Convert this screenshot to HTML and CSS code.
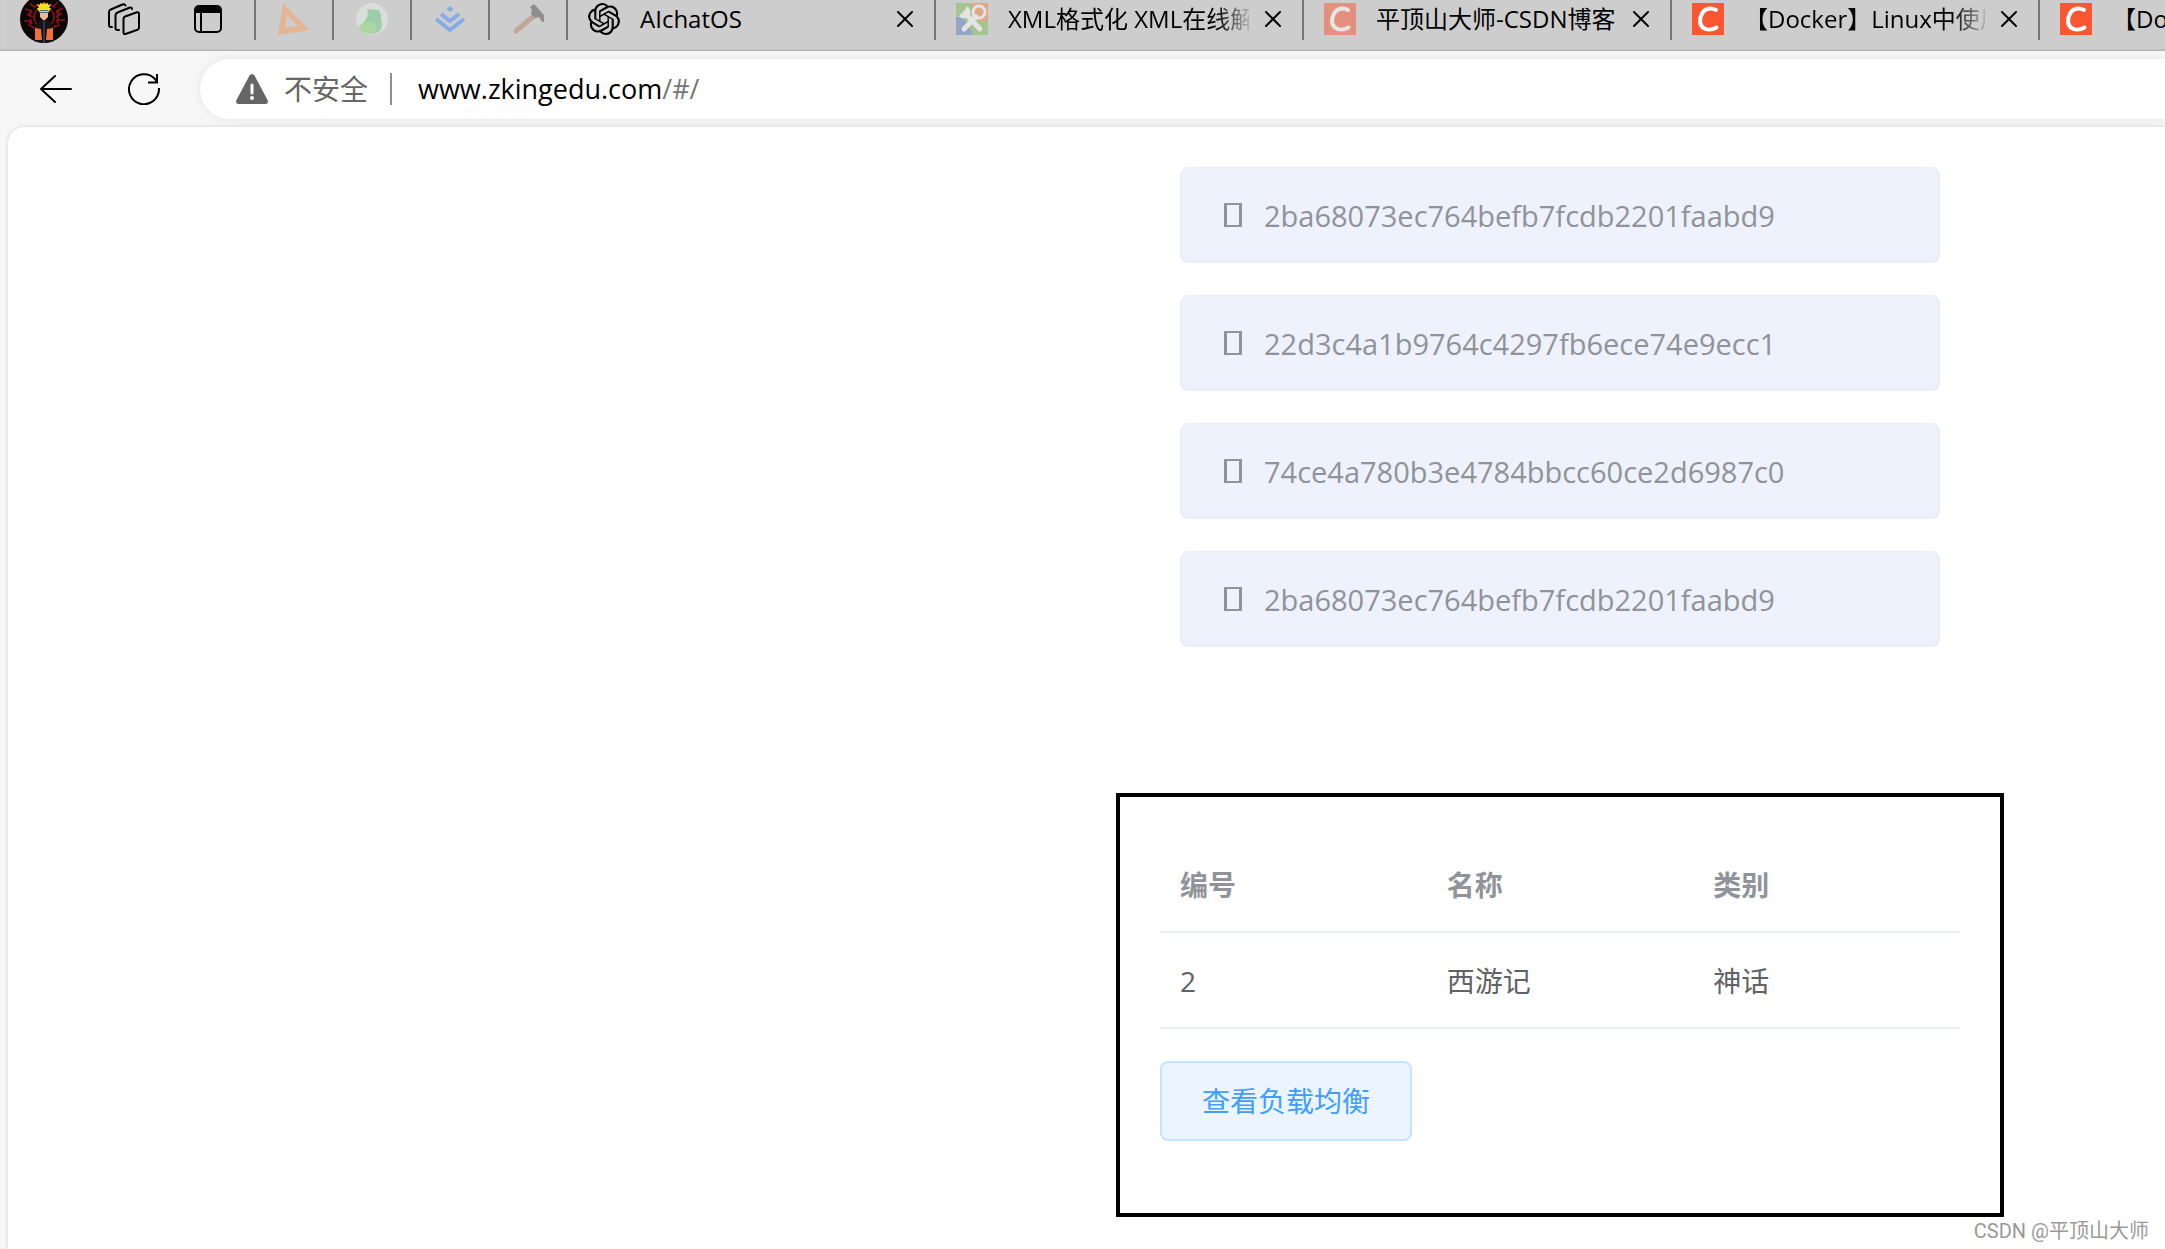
FILE: index.html
```html
<!DOCTYPE html>
<html lang="zh-CN">
<head>
<meta charset="utf-8">
<meta name="viewport" content="width=device-width, initial-scale=1">
<title>www.zkingedu.com</title>
<link rel="stylesheet" href="styles.css">
</head>
<body>
<svg class="sprite" aria-hidden="true">
  <symbol id="close" viewBox="0 0 16 16"><path d="M1 1l14 14M15 1L1 15" fill="none" stroke="#000" stroke-width="2" stroke-linecap="round"/></symbol>
  <symbol id="csdn" viewBox="0 0 32 32"><rect width="32" height="32" fill="#fc5531"/><path d="M24 7C19 4 13 5.500 10 10.500C7 16 7.500 22 11 24.500C14.500 27.500 20 27 24.500 24.500" fill="none" stroke="#fff" stroke-width="4" stroke-linecap="round" stroke-linejoin="round"/></symbol>
</svg>

<header class="browser">
  <div class="strip">
    <div class="strip-tools">
      <button class="avatar" aria-label="个人资料">
        <svg viewBox="0 0 48 48" width="48" height="48">
          <defs><clipPath id="round"><circle cx="24" cy="24" r="24"/></clipPath></defs>
          <g clip-path="url(#round)">
            <rect width="48" height="48" fill="#0b0708"/>
            <g fill="none" stroke="#8e1015" stroke-width="1.500">
              <circle cx="24" cy="22" r="10"/>
              <circle cx="24" cy="22" r="14" stroke-dasharray="6 3"/>
              <path d="M5 14l6 2-3 4 5 2M4 26h7l-2 4 5 3M43 13l-6 3 4 3-5 3M45 25h-8l2 5-5 2M10 8l4 4M38 7l-5 5"/>
            </g>
            <path d="M16 29l5-4h7l4 4 2 19H14z" fill="#141419"/>
            <path d="M15 33l6 1 1 11h-7zM33 33l-6 1-1 11h7z" fill="#f0703a"/>
            <path d="M23 25h2v23h-2z" fill="#34343c"/>
            <path d="M20 17h8v5l-3 3h-2l-3-3z" fill="#f0b891"/>
            <path d="M19 15h10v3H19z" fill="#59657a"/>
            <path d="M20 16h8v1h-8z" fill="#c9d0d8"/>
            <path d="M19 17l-2-4 2 0-2-4 3 1 0-2 3 1 1-2 1 2 3-1 0 2 3-1-2 4 2 0-2 4-1-2H20z" fill="#f4e21b"/>
          </g>
        </svg>
      </button>
      <button class="tool" aria-label="工作区">
        <svg viewBox="0 0 32 32" width="32" height="32" fill="none" stroke="#000" stroke-width="2" stroke-linejoin="round" stroke-linecap="round">
          <path d="M17 13.500L29 9.200Q31 8.800 31 11V24.500Q31 26.200 29.500 26.800L17.500 31Q15.500 31.500 15.500 29.500V16Q15.500 14 17 13.500z"/>
          <path d="M11 27H9.500Q7.500 27 7.500 25V12.500Q7.500 10.500 9.500 9.500L22 4.500Q24 4.200 24 6"/>
          <path d="M4 24H3Q1 24 1 22V9Q1 7.200 2.800 6.500L14.500 1.500Q17 .7 17.500 2.500"/>
        </svg>
      </button>
      <button class="tool" aria-label="标签页操作">
        <svg viewBox="0 0 28 28" width="28" height="28"><rect x="1" y="1" width="26" height="26" rx="4" fill="none" stroke="#000" stroke-width="2"/><path d="M1 8V4q0-3 3-3h20q3 0 3 3v4zM6 8h2v19H6z"/></svg>
      </button>
    </div>

    <nav class="tabs" aria-label="标签页">
      <div class="tab pinned"><svg class="icon faded" viewBox="0 0 32 32"><path d="M5 0L31 27 0 32zM9 12L7 25 20 23z" fill="#fa9f5b" fill-rule="evenodd"/></svg></div>
      <div class="tab pinned"><svg class="icon faded" viewBox="0 0 32 32"><circle cx="16" cy="16" r="16" fill="#e8f0ea"/><path d="M11 6l12 1 2 5v5q3 8-3 12-6 4-13 1Q4 27 3 24q9-8 9-14z" fill="#6fd088"/><path d="M2 24q8-8 17-3 3 5 0 10-12 1-17-7z" fill="#8fe07b"/></svg></div>
      <div class="tab pinned"><svg class="icon faded" viewBox="0 0 32 32"><path d="M16 3l3.500 3-3.500 3-3.500-3z" fill="#408cff"/><path d="M7 11l9 7 9-7M2 16l14 11 14-11" fill="none" stroke="#408cff" stroke-width="4"/></svg></div>
      <div class="tab pinned"><svg class="icon" viewBox="0 0 32 32"><path d="M23 12L4 28" stroke="#c1a698" stroke-width="5" stroke-linecap="round"/><path d="M18 4l4-3 10 11v7l-2 0-3-5-4 1-4-4 1-4z" fill="#8e8e8e"/></svg></div>
      <div class="tab">
        <svg class="icon" viewBox="0 0 24 24"><path d="M22.2819 9.8211a5.9847 5.9847 0 0 0-.5157-4.9108 6.0462 6.0462 0 0 0-6.5098-2.9A6.0651 6.0651 0 0 0 4.9807 4.1818a5.9847 5.9847 0 0 0-3.9977 2.9 6.0462 6.0462 0 0 0 .7427 7.0966 5.98 5.98 0 0 0 .511 4.9107 6.051 6.051 0 0 0 6.5146 2.9001A5.9847 5.9847 0 0 0 13.2599 24a6.0557 6.0557 0 0 0 5.7718-4.2058 5.9894 5.9894 0 0 0 3.9977-2.9001 6.0557 6.0557 0 0 0-.7475-7.0729zm-9.022 12.6081a4.4755 4.4755 0 0 1-2.8764-1.0408l.1419-.0804 4.7783-2.7582a.7948.7948 0 0 0 .3927-.6813v-6.7369l2.02 1.1686a.071.071 0 0 1 .038.052v5.5826a4.504 4.504 0 0 1-4.4945 4.4944zm-9.6607-4.1254a4.4708 4.4708 0 0 1-.5346-3.0137l.142.0852 4.783 2.7582a.7712.7712 0 0 0 .7806 0l5.8428-3.3685v2.3324a.0804.0804 0 0 1-.0332.0615L9.74 19.9502a4.4992 4.4992 0 0 1-6.1408-1.6464zM2.3408 7.8956a4.485 4.485 0 0 1 2.3655-1.9728V11.6a.7664.7664 0 0 0 .3879.6765l5.8144 3.3543-2.0201 1.1685a.0757.0757 0 0 1-.071 0l-4.8303-2.7865A4.504 4.504 0 0 1 2.3408 7.872zm16.5963 3.8558L13.1038 8.364 15.1192 7.2a.0757.0757 0 0 1 .071 0l4.8303 2.7913a4.4944 4.4944 0 0 1-.6765 8.1042v-5.6772a.79.79 0 0 0-.407-.667zm2.0107-3.0231l-.142-.0852-4.7735-2.7818a.7759.7759 0 0 0-.7854 0L9.409 9.2297V6.8974a.0662.0662 0 0 1 .0284-.0615l4.8303-2.7866a4.4992 4.4992 0 0 1 6.6802 4.66zM8.3065 12.863l-2.02-1.1638a.0804.0804 0 0 1-.038-.0567V6.0742a4.4992 4.4992 0 0 1 7.3757-3.4537l-.142.0805L8.704 5.459a.7948.7948 0 0 0-.3927.6813zm1.0976-2.3654l2.602-1.4998 2.6069 1.4998v2.9994l-2.5974 1.4997-2.6067-1.4997Z"/></svg>
        <span class="title">AIchatOS</span>
        <button class="close" aria-label="关闭"><svg width="16" height="16"><use href="#close"/></svg></button>
      </div>
      <div class="tab">
        <svg class="icon" viewBox="0 0 32 32"><rect width="32" height="32" fill="#a6c48e"/><path d="M16 0h16v18h-8L16 8z" fill="#dfa883"/><path d="M0 14h6l10 14v4H0z" fill="#95a5c5"/><circle cx="23" cy="9" r="6" fill="#dfa883" stroke="#e4e4e4" stroke-width="3"/><path d="M9 10l15 16M20 14L8 26" stroke="#e4e4e4" stroke-width="5" stroke-linecap="round"/><path d="M4 12q5 3 8-1 1-4-2-6" fill="none" stroke="#e4e4e4" stroke-width="4"/></svg>
        <span class="title fade">XML格式化 XML在线解析</span>
        <button class="close" aria-label="关闭"><svg width="16" height="16"><use href="#close"/></svg></button>
      </div>
      <div class="tab">
        <svg class="icon faded"><use href="#csdn"/></svg>
        <span class="title">平顶山大师-CSDN博客</span>
        <button class="close" aria-label="关闭"><svg width="16" height="16"><use href="#close"/></svg></button>
      </div>
      <div class="tab">
        <svg class="icon"><use href="#csdn"/></svg>
        <span class="title fade">【Docker】Linux中使用</span>
        <button class="close" aria-label="关闭"><svg width="16" height="16"><use href="#close"/></svg></button>
      </div>
      <div class="tab">
        <svg class="icon"><use href="#csdn"/></svg>
        <span class="title">【Docker】</span>
      </div>
    </nav>
  </div>

  <div class="toolbar">
    <button class="tool" aria-label="后退"><svg viewBox="0 0 32 32" width="32" height="32" fill="none" stroke="#000" stroke-width="2" stroke-linecap="round" stroke-linejoin="round"><path d="M31 16H1M15 3L1 16l14 13"/></svg></button>
    <button class="tool" aria-label="刷新"><svg viewBox="0 0 32 32" width="32" height="32" fill="none" stroke="#000" stroke-width="2" stroke-linecap="square"><path d="M31 16a15 15 0 1 1-4-10l2 3M29 2v7.500h-8"/></svg></button>
    <form class="address">
      <svg viewBox="0 0 32 30" width="32" height="30"><path d="M16 0q1.500 0 2.500 1.500L31.500 26q1.500 4-2 4h-27q-3.500 0-2-4L13.500 1.500Q14.500 0 16 0z" fill="#666"/><path d="M16 11v8" stroke="#fff" stroke-width="3" stroke-linecap="round"/><circle cx="16" cy="24" r="2" fill="#fff"/></svg>
      <label class="security" for="url">不安全</label>
      <span class="rule"></span>
      <span class="url"><input id="url" type="text" value="www.zkingedu.com" spellcheck="false"><span class="path">/#/</span></span>
    </form>
  </div>
</header>

<main class="page">
  <div class="content">
    <ul class="alerts">
      <li class="alert"><i class="glyph"></i>2ba68073ec764befb7fcdb2201faabd9</li>
      <li class="alert"><i class="glyph"></i>22d3c4a1b9764c4297fb6ece74e9ecc1</li>
      <li class="alert"><i class="glyph"></i>74ce4a780b3e4784bbcc60ce2d6987c0</li>
      <li class="alert"><i class="glyph"></i>2ba68073ec764befb7fcdb2201faabd9</li>
    </ul>
    <section class="panel">
      <table class="books">
        <thead><tr><th scope="col">编号</th><th scope="col">名称</th><th scope="col">类别</th></tr></thead>
        <tbody><tr><td>2</td><td>西游记</td><td>神话</td></tr></tbody>
      </table>
      <button class="balance">查看负载均衡</button>
    </section>
  </div>
  <p class="watermark">CSDN @平顶山大师</p>
</main>
</body>
</html>
```
FILE: styles.css
```css
* {
  box-sizing: border-box;
}

body {
  margin: 0;
  min-height: 100vh;
  display: flex;
  flex-direction: column;
  overflow-x: hidden;
  background: #f7f7f7;
  color: #606266;
  font-family: "Open Sans", "Noto Sans CJK SC", sans-serif;
  font-size: 28px;
}

button {
  margin: 0;
  padding: 0;
  border: 0;
  background: none;
  font: inherit;
  cursor: pointer;
}

svg {
  display: block;
  flex: none;
}

.sprite {
  position: absolute;
  width: 0;
  height: 0;
}

/* Tab strip */
.strip {
  display: flex;
  height: 51px;
  overflow: hidden;
  background: #cdcdcd;
  box-shadow: inset 0 -2px 2px -1px #aaa;
}

.strip-tools {
  display: flex;
  flex: none;
  align-items: center;
  width: 254px;
  height: 38px;
  padding-left: 20px;
  gap: 40px;
}

.strip-tools .tool:last-child {
  margin-left: 14px;
}

.avatar {
  width: 48px;
  height: 48px;
}

.tabs {
  display: flex;
  flex: 1;
  min-width: 0;
}

.tab {
  display: flex;
  flex: none;
  align-items: center;
  width: 368px;
  height: 40px;
  padding: 0 13px 2px 20px;
  border-left: 2px solid #767676;
  color: #000;
  font-size: 24px;
}

.pinned {
  width: 78px;
  padding-left: 22px;
}

.icon {
  width: 32px;
  height: 32px;
}

.faded {
  opacity: 0.5;
}

.title {
  flex: none;
  width: 241px;
  margin: 0 8px 0 20px;
  overflow: hidden;
  white-space: nowrap;
  line-height: 36px;
}

.fade {
  mask-image: linear-gradient(to right, #000 208px, transparent 246px);
}

.close {
  display: grid;
  place-items: center;
  width: 32px;
  height: 32px;
}

/* Toolbar */
.toolbar {
  display: flex;
  align-items: center;
  height: 76px;
  padding: 0 0 0 40px;
}

.toolbar .tool + .tool {
  margin-left: 56px;
}

.address {
  display: flex;
  flex: 1;
  align-items: center;
  height: 60px;
  margin-left: 40px;
  padding-left: 36px;
  border-radius: 30px 0 0 30px;
  background: #fff;
  box-shadow: 0 0 12px rgba(0, 0, 0, 0.08);
}

.security {
  margin-left: 16px;
  color: #666;
  line-height: 40px;
}

.rule {
  width: 2px;
  height: 32px;
  margin: 0 26px 0 22px;
  background: #909090;
}

.url {
  display: flex;
  font-size: 27px;
  line-height: 40px;
}

.url input {
  field-sizing: content;
  padding: 0;
  border: 0;
  outline: 0;
  background: none;
  color: #000;
  font: inherit;
}

.path {
  color: #767676;
}

/* Page */
.page {
  position: relative;
  flex: 1;
  margin-left: 8px;
  padding: 40px 0 32px;
  border-radius: 16px 0 0 0;
  background: #fff;
  box-shadow: 0 0 4px rgba(0, 0, 0, 0.16);
}

.content {
  display: grid;
  grid-template-columns: minmax(0, 888px);
  justify-content: end;
  gap: 146px;
  padding-right: 161px;
}

.alerts {
  display: grid;
  gap: 32px;
  margin: 0;
  padding: 0 64px;
  list-style: none;
}

.alert {
  display: flex;
  align-items: center;
  height: 96px;
  padding-left: 42px;
  gap: 22px;
  border: 2px solid #ebeef5;
  border-radius: 8px;
  background: #edf2fc;
  color: #909399;
  font-size: 29px;
}

.glyph {
  width: 18px;
  height: 24px;
  border: solid #909399;
  border-width: 2px 3px;
}

.panel {
  padding: 40px 40px 72px;
  border: 4px solid #000;
}

.books {
  width: 100%;
  table-layout: fixed;
  border-collapse: separate;
  border-spacing: 0;
}

.books th,
.books td {
  height: 96px;
  padding: 2px 20px 0;
  border-bottom: 2px solid #ebeef5;
  text-align: left;
  line-height: 46px;
}

.books th {
  color: #909399;
  font-weight: 700;
}

.balance {
  height: 80px;
  margin-top: 32px;
  padding: 0 40px 2px;
  border: 2px solid #c6e2ff;
  border-radius: 8px;
  background: #ecf5ff;
  color: #409eff;
}

.watermark {
  position: absolute;
  right: 16px;
  bottom: 4px;
  margin: 0;
  color: #999;
  font-family: Roboto, "Noto Sans CJK SC", sans-serif;
  font-size: 20px;
  line-height: 28px;
}
```
